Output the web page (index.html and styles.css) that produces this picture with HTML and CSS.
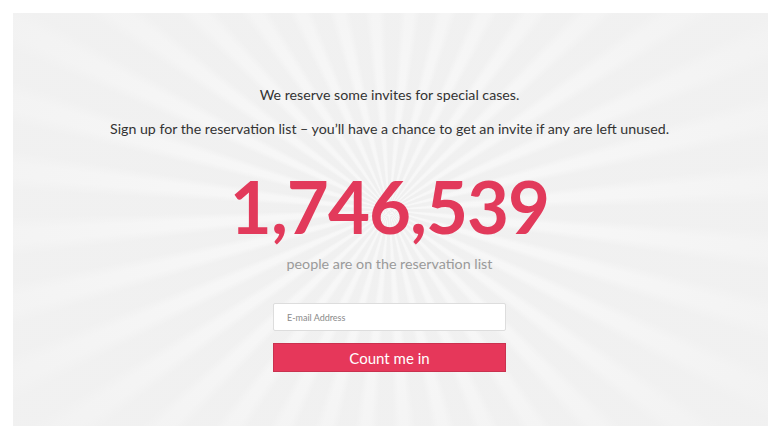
FILE: index.html
```html
<!DOCTYPE html>
<html>
<head>
<meta charset="utf-8">
<link rel="stylesheet" href="styles.css">
</head>
<body>
<div class="panel">
  <div class="content">
    <p class="lead">We reserve some invites for special cases.</p>
    <p class="lead second">Sign up for the reservation list – you’ll have a chance to get an invite if any are left unused.</p>
    <div class="count">1,746,539</div>
    <p class="sub">people are on the reservation list</p>
    <form class="signup">
      <input class="email" type="text" placeholder="E-mail Address">
      <button class="btn" type="button">Count me in</button>
    </form>
  </div>
</div>
</body>
</html>
```
FILE: styles.css
```css
html, body {
  margin: 0;
  padding: 0;
  background: #ffffff;
}
body {
  padding: 13px 14px 14px 13px;
  font-family: Lato, "Noto Sans", sans-serif;
}
.panel {
  width: 755px;
  height: 413px;
  overflow: hidden;
  background:
    radial-gradient(ellipse 460px 320px at 376px 197px, rgba(242,242,242,0) 0%, rgba(242,242,242,0.3) 45%, rgba(241,241,241,0.8) 100%),
    repeating-conic-gradient(from 0deg at 376px 197px, #f0f0f0 0deg, #f0f0f0 3deg, #f8f8f8 5deg, #f8f8f8 7deg, #f0f0f0 9deg, #f0f0f0 10deg);
}
.content {
  display: flex;
  flex-direction: column;
  align-items: center;
  padding-top: 72px;
  padding-right: 2px;
}
.lead {
  margin: 0;
  font-size: 14.2px;
  line-height: 20px;
  color: #333333;
}
.second {
  margin-top: 14px;
}
.count {
  margin-top: 30px;
  font-size: 72.5px;
  line-height: 74px;
  font-weight: 700;
  color: #e23a5b;
  letter-spacing: -1px;
}
.sub {
  margin: 11px 0 0;
  font-size: 14.3px;
  line-height: 20px;
  color: #9a9a9a;
}
.signup {
  margin-top: 29px;
  display: flex;
  flex-direction: column;
  gap: 12px;
  width: 233px;
}
.email {
  box-sizing: border-box;
  height: 28px;
  width: 100%;
  border: 1px solid #dddddd;
  border-radius: 2px;
  background: #ffffff;
  padding: 0 13px;
  font-family: Lato, "Noto Sans", sans-serif;
  font-size: 9px;
  outline: none;
}
.email::placeholder {
  color: #8a8a8a;
}
.btn {
  box-sizing: border-box;
  height: 29px;
  width: 100%;
  border: 1px solid #c9324f;
  background: #e6375a;
  color: #ffffff;
  font-family: Lato, "Noto Sans", sans-serif;
  font-size: 15px;
  padding: 0;
  cursor: pointer;
}
```
